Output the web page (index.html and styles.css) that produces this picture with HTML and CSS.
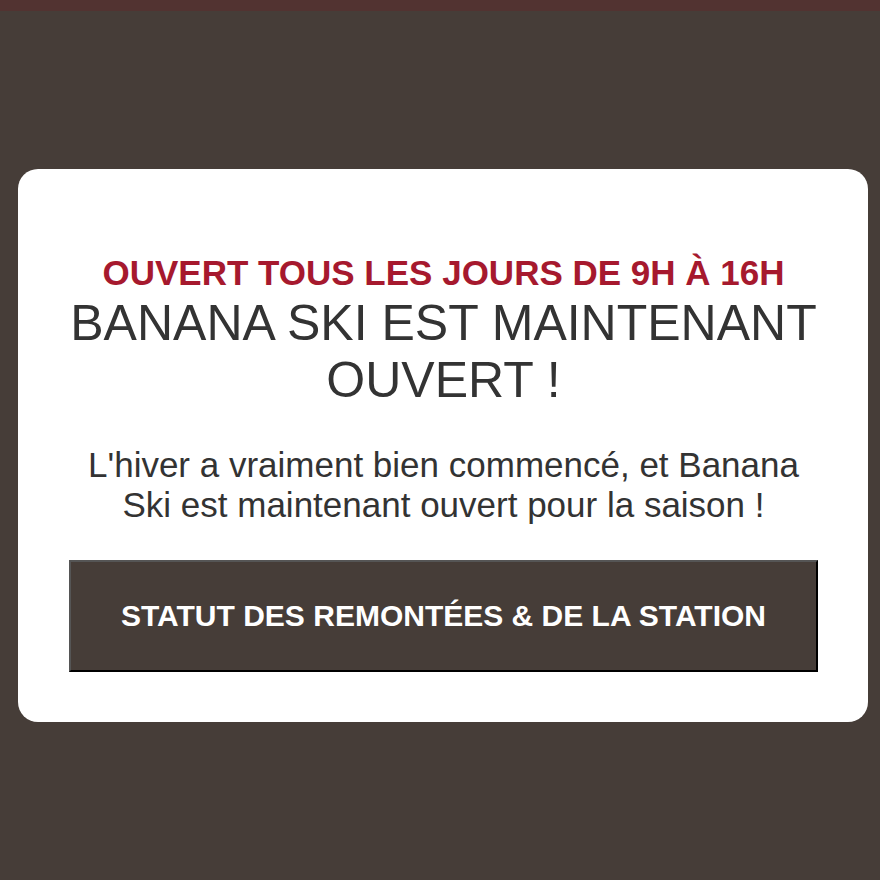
FILE: index.html
```html
<!DOCTYPE html>
<html lang="fr">
<head>
<meta charset="utf-8">
<link rel="stylesheet" href="styles.css">
</head>
<body>
<div class="topbar"></div>
<main class="stage">
  <section class="card">
    <h2 class="kicker">OUVERT TOUS LES JOURS DE 9H À 16H</h2>
    <h1 class="title">BANANA SKI EST MAINTENANT OUVERT !</h1>
    <p class="text">L'hiver a vraiment bien commencé, et Banana Ski est maintenant ouvert pour la saison !</p>
    <a class="button" href="#">STATUT DES REMONTÉES &amp; DE LA STATION</a>
  </section>
</main>
</body>
</html>
```
FILE: styles.css
```css
html, body {
  margin: 0;
  padding: 0;
  background: #463d38;
  font-family: "Liberation Sans", Arial, sans-serif;
}
.topbar {
  height: 11px;
  background: #523331;
}
.stage {
  padding: 158px 12px 0 18px;
}
.card {
  width: 850px;
  height: 553px;
  box-sizing: border-box;
  background: #fff;
  border-radius: 20px;
  padding: 82px 50px 0 51px;
  text-align: center;
  display: flex;
  flex-direction: column;
  align-items: stretch;
}
.kicker {
  margin: 0;
  color: #a6192e;
  font-size: 35px;
  font-weight: bold;
  line-height: 44px;
}
.title {
  margin: 0;
  color: #333;
  font-size: 50px;
  font-weight: normal;
  line-height: 57px;
}
.text {
  margin: 36px 0 0;
  padding: 0 15px;
  color: #333;
  font-size: 35px;
  line-height: 40px;
}
.button {
  margin-top: 35px;
  height: 112px;
  box-sizing: border-box;
  display: flex;
  align-items: center;
  justify-content: center;
  background: #463d38;
  color: #fff;
  font-size: 30px;
  font-weight: bold;
  text-decoration: none;
  border-style: solid;
  border-width: 2px;
  border-color: #555 #000 #000 #555;
}
```
